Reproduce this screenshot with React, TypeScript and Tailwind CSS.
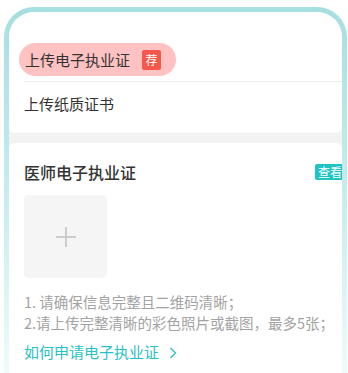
import React from 'react';

const font = { fontFamily: '"Noto Sans CJK SC", "Noto Sans", sans-serif' };

const Plus = () => (
  <svg width="22" height="22" viewBox="0 0 22 22" fill="none">
    <path d="M11 1v20M1 11h20" stroke="#cccccc" strokeWidth="2" />
  </svg>
);

const Chevron = () => (
  <svg width="8" height="12" viewBox="0 0 8 12" fill="none">
    <path d="M1.5 1l5 5-5 5" stroke="#27c1c4" strokeWidth="1.3" />
  </svg>
);

export default function App() {
  return (
    <div className="w-[348px] h-[373px] bg-white overflow-hidden" style={font}>
      <div className="ml-[4px] mt-[7px] w-[343px] h-[400px] rounded-[30px] p-[5px] bg-gradient-to-b from-[#a6dfe1] via-[#c9eeef] to-[#f7fdfd]">
        <div className="h-full rounded-[25px] bg-[#f2f2f2] overflow-hidden">
          {/* upload type rows */}
          <div className="bg-white rounded-b-[6px] pt-[31px] h-[121px]">
            <div className="ml-[10px] inline-flex items-center h-[33px] pl-[6px] pr-[15px] rounded-full bg-[#ffc2c2]">
              <span className="text-[15px] leading-[20px] text-[#333]">上传电子执业证</span>
              <span className="ml-[12px] w-[19px] h-[20px] rounded-[2px] bg-[#f5574b] text-white text-[12px] leading-[20px] text-center">荐</span>
            </div>
            <div className="mt-[5px] ml-[15px] h-px bg-[#ececec]" />
            <div className="h-[44px] pl-[15px] flex items-center text-[15px] text-[#333]">上传纸质证书</div>
          </div>

          {/* certificate card */}
          <div className="mt-[10px] bg-white rounded-[6px] pt-[20px] pl-[15px] pb-[20px]">
            <div className="flex items-center h-[18px]">
              <span className="text-[16px] leading-[18px] font-medium text-[#333]">医师电子执业证</span>
              <span className="ml-auto mr-[-3px] h-[16px] px-[3px] rounded-[2px] bg-[#1fc3c3] text-white text-[12px] leading-[16px] whitespace-nowrap">查看</span>
            </div>
            <div className="mt-[14px] w-[83px] h-[83px] rounded-[5px] bg-[#f5f5f5] flex items-center justify-center">
              <Plus />
            </div>
            <div className="mt-[13px] text-[14.5px] leading-[21px] text-[#a3a3a3] whitespace-nowrap">
              <p>1. 请确保信息完整且二维码清晰；</p>
              <p>2.请上传完整清晰的彩色照片或截图，最多5张；</p>
            </div>
            <div className="mt-[9px] flex items-center h-[21px] text-[15px] text-[#27c1c4]">
              <span>如何申请电子执业证</span>
              <span className="ml-[10px]"><Chevron /></span>
            </div>
          </div>
        </div>
      </div>
    </div>
  );
}
